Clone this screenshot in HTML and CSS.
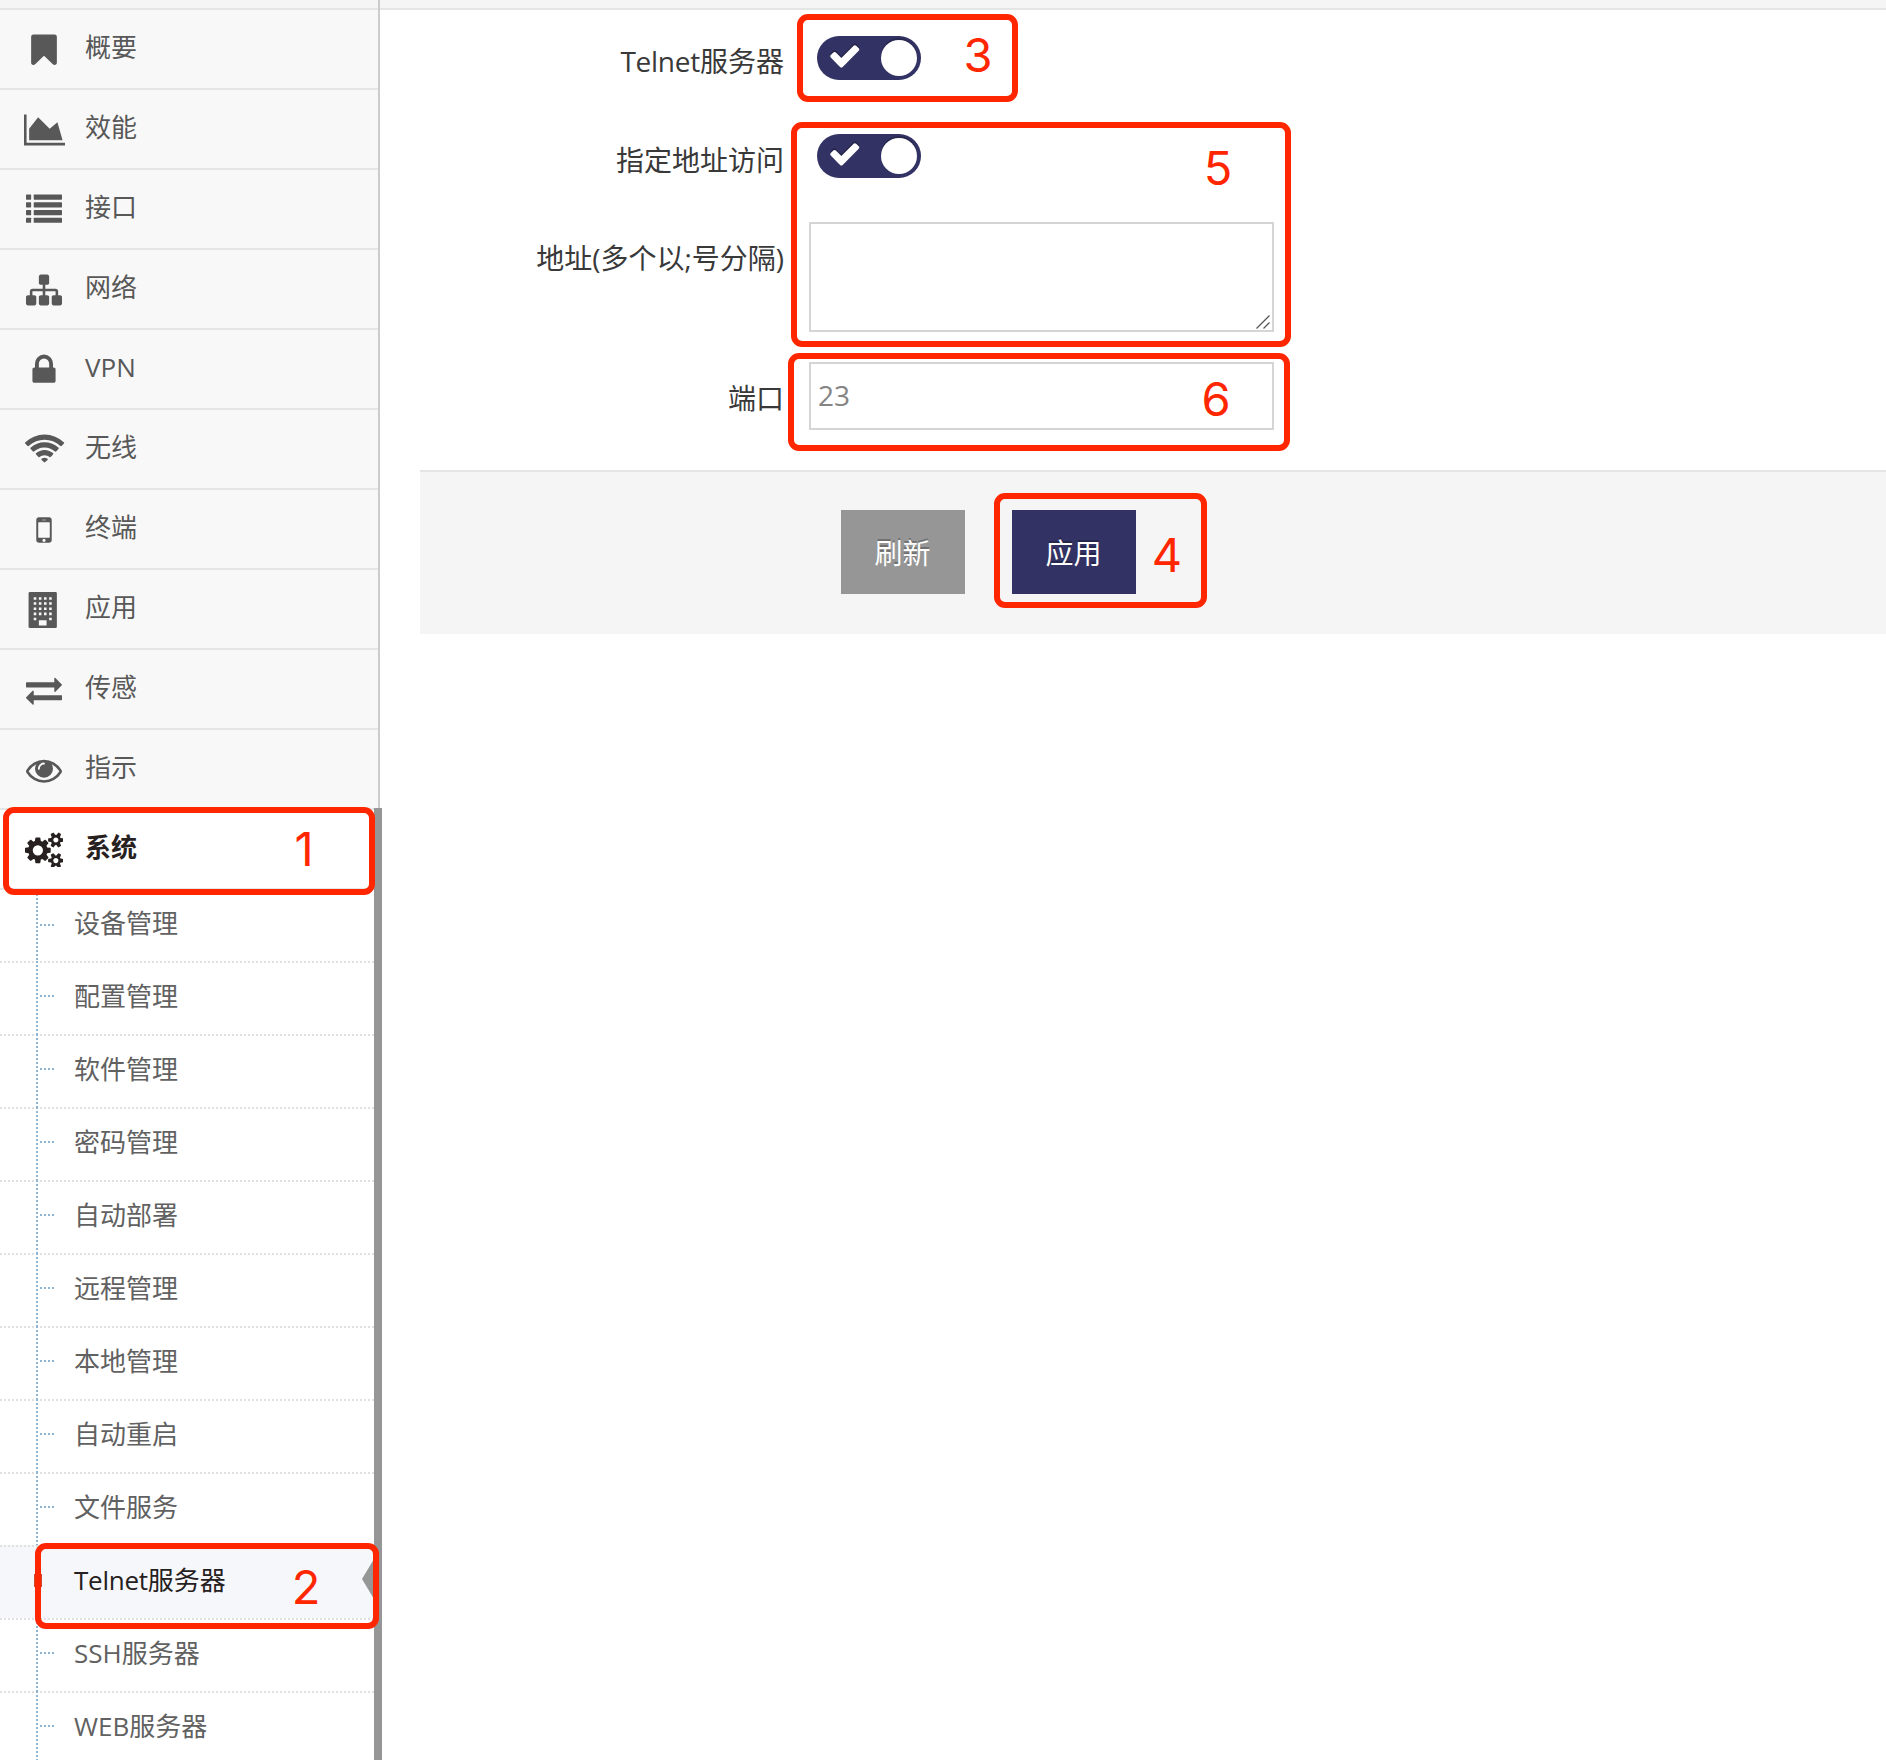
FILE: index.html
```html
<!DOCTYPE html>
<html lang="zh-CN">
<head>
<meta charset="utf-8">
<title>Telnet服务器</title>
<link rel="stylesheet" href="styles.css">
</head>
<body>
<div class="page">
  <aside class="sidebar">
    <ul class="menu">
      <li class="menu-item"><span class="icon"><svg width="36" height="36" viewBox="0 0 1792 1792"><path d="M1420 128q23 0 44 9 33 13 52.500 41t19.500 62v1289q0 34-19.500 62t-52.500 41q-19 8-44 8-48 0-83-32l-441-424-441 424q-36 33-83 33-23 0-44-9-33-13-52.500-41t-19.500-62v-1289q0-34 19.500-62t52.500-41q21-9 44-9h1048z"/></svg></span>概要</li>
      <li class="menu-item"><span class="icon wide"><svg width="41.140" height="36" viewBox="0 0 2048 1792"><path d="M2048 1536v128h-2048v-1536h128v1408h1920zm-384-1024l256 896h-1664v-576l448-576 576 576z"/></svg></span>效能</li>
      <li class="menu-item"><span class="icon"><svg width="36" height="36" viewBox="0 0 1792 1792"><g><rect y="128" width="256" height="256" rx="32"/><rect x="384" y="128" width="1408" height="256" rx="32"/><rect y="512" width="256" height="256" rx="32"/><rect x="384" y="512" width="1408" height="256" rx="32"/><rect y="896" width="256" height="256" rx="32"/><rect x="384" y="896" width="1408" height="256" rx="32"/><rect y="1280" width="256" height="256" rx="32"/><rect x="384" y="1280" width="1408" height="256" rx="32"/></g></svg></span>接口</li>
      <li class="menu-item"><span class="icon"><svg width="36" height="36" viewBox="0 0 1792 1792"><path d="M1792 1248v320q0 40-28 68t-68 28h-320q-40 0-68-28t-28-68v-320q0-40 28-68t68-28h96v-192h-512v192h96q40 0 68 28t28 68v320q0 40-28 68t-68 28h-320q-40 0-68-28t-28-68v-320q0-40 28-68t68-28h96v-192h-512v192h96q40 0 68 28t28 68v320q0 40-28 68t-68 28h-320q-40 0-68-28t-28-68v-320q0-40 28-68t68-28h96v-192q0-52 38-90t90-38h512v-192h-96q-40 0-68-28t-28-68v-320q0-40 28-68t68-28h320q40 0 68 28t28 68v320q0 40-28 68t-68 28h-96v192h512q52 0 90 38t38 90v192h96q40 0 68 28t28 68z"/></svg></span>网络</li>
      <li class="menu-item"><span class="icon"><svg width="36" height="36" viewBox="0 0 1792 1792"><path d="M640 768h512v-192q0-106-75-181t-181-75-181 75-75 181v192zm832 96v576q0 40-28 68t-68 28h-960q-40 0-68-28t-28-68v-576q0-40 28-68t68-28h32v-192q0-184 132-316t316-132 316 132 132 316v192h32q40 0 68 28t28 68z"/></svg></span>VPN</li>
      <li class="menu-item"><span class="icon wide"><svg width="41.140" height="36" viewBox="0 0 2048 1792"><path d="M1024 1523q-20 0-93-73.500t-73-93.500q0-32 62.500-54t103.500-22 103.500 22 62.500 54q0 20-73 93.500t-93 73.500zm270-271q-2 0-40-25t-101.500-50-128.500-25-128.500 25-101 50-40.500 25q-18 0-93.500-75t-75.500-93q0-13 10-23 78-77 196-121t233-44 233 44 196 121q10 10 10 23 0 18-75.500 93t-93.500 75zm273-272q-11 0-23-8-136-105-252-154.500t-268-49.500q-85 0-170.500 22t-149 53-113.500 62-79 53-31 22q-17 0-92-75t-75-93q0-12 10-22 132-132 320-205t380-73 380 73 320 205q10 10 10 22 0 18-75 93t-92 75zm271-271q-11 0-22-9-179-157-371.500-236.500t-420.500-79.500-420.500 79.500-371.500 236.500q-11 9-22 9-17 0-92.500-75t-75.500-93q0-13 10-23 187-186 445-288t527-102 527 102 445 288q10 10 10 23 0 18-75.500 93t-92.500 75z"/></svg></span>无线</li>
      <li class="menu-item"><span class="icon"><svg width="36" height="36" viewBox="0 0 1792 1792"><path d="M976 1408q0-33-23.500-56.500t-56.500-23.500-56.500 23.500-23.500 56.500 23.500 56.500 56.500 23.500 56.500-23.500 23.500-56.500zm208-160v-704q0-13-9.500-22.500t-22.500-9.500h-512q-13 0-22.500 9.500t-9.500 22.500v704q0 13 9.500 22.500t22.500 9.500h512q13 0 22.500-9.500t9.500-22.500zm-192-848q0-16-16-16h-160q-16 0-16 16t16 16h160q16 0 16-16zm288-16v1024q0 52-38 90t-90 38h-512q-52 0-90-38t-38-90v-1024q0-52 38-90t90-38h512q52 0 90 38t38 90z"/></svg></span>终端</li>
      <li class="menu-item"><span class="icon"><svg width="36" height="36" viewBox="0 0 1792 1792"><path fill-rule="evenodd" d="M192 0h1280q64 0 64 64v1664q0 64-64 64h-1280q-64 0-64-64v-1664q0-64 64-64zM384 256v128h128v-128zm256 0v128h128v-128zm256 0v128h128v-128zm256 0v128h128v-128zM384 512v128h128v-128zm256 0v128h128v-128zm256 0v128h128v-128zm256 0v128h128v-128zM384 768v128h128v-128zm256 0v128h128v-128zm256 0v128h128v-128zm256 0v128h128v-128zM384 1024v128h128v-128zm256 0v128h128v-128zm256 0v128h128v-128zm256 0v128h128v-128zM384 1280v128h128v-128zm768 0v128h128v-128zM640 1408v256h384v-256z"/></svg></span>应用</li>
      <li class="menu-item"><span class="icon"><svg width="36" height="36" viewBox="0 0 1792 1792"><path d="M1792 1184v192q0 13-9.500 22.500t-22.500 9.500h-1376v192q0 13-9.500 22.500t-22.500 9.500q-12 0-24-10l-319-320q-9-9-9-22 0-14 9-23l320-320q9-9 23-9 13 0 22.500 9.500t9.500 22.500v192h1376q13 0 22.500 9.500t9.500 22.500zm0-544q0 14-9 23l-320 320q-9 9-23 9-13 0-22.500-9.500t-9.500-22.500v-192h-1376q-13 0-22.500-9.500t-9.500-22.500v-192q0-13 9.500-22.500t22.500-9.500h1376v-192q0-14 9-23t23-9q12 0 24 10l319 319q9 9 9 23z"/></svg></span>传感</li>
      <li class="menu-item"><span class="icon"><svg width="36" height="36" viewBox="0 0 1792 1792"><path d="M1664 960q-152-236-381-353 61 104 61 225 0 185-131.500 316.500t-316.500 131.500-316.500-131.500-131.500-316.500q0-121 61-225-229 117-381 353 133 205 333.500 326.500t434.500 121.500 434.500-121.500 333.500-326.500zm-720-384q0-20-14-34t-34-14q-125 0-214.500 89.500t-89.500 214.500q0 20 14 34t34 14 34-14 14-34q0-86 61-147t147-61q20 0 34-14t14-34zm848 384q0 34-20 69-140 230-376.500 368.500t-499.500 138.500-499.500-139-376.500-368q-20-35-20-69t20-69q140-229 376.500-368t499.500-139 499.500 139 376.500 368q20 35 20 69z"/></svg></span>指示</li>
    </ul>
    <div class="menu-open">
      <div class="menu-item active"><span class="icon"><svg width="38.570" height="36" viewBox="0 0 1920 1792"><path d="M896 960q0-106-75-181t-181-75-181 75-75 181 75 181 181 75 181-75 75-181zm768 512q0-52-38-90t-90-38-90 38-38 90q0 53 37.500 90.500t90.500 37.500 90.500-37.500 37.500-90.500zm0-1024q0-52-38-90t-90-38-90 38-38 90q0 53 37.500 90.500t90.500 37.500 90.500-37.500 37.500-90.500zm-384 421v185q0 10-7 19.500t-16 10.500l-155 24q-11 35-32 76 34 48 90 115 7 11 7 20 0 12-7 19-23 30-82.500 89.500t-78.500 59.500q-11 0-21-7l-115-90q-37 19-77 31-11 108-23 155-7 24-30 24h-186q-11 0-20-7.500t-10-17.500l-23-153q-34-10-75-31l-118 89q-7 7-20 7-11 0-21-8-144-133-144-160 0-9 7-19 10-14 41-53t47-61q-23-44-35-82l-152-24q-10-1-17-9.500t-7-19.500v-185q0-10 7-19.500t16-10.500l155-24q11-35 32-76-34-48-90-115-7-11-7-20 0-12 7-20 22-30 82-89t79-59q11 0 21 7l115 90q34-18 77-32 11-108 23-154 7-24 30-24h186q11 0 20 7.500t10 17.500l23 153q34 10 75 31l118-89q8-7 20-7 11 0 21 8 144 133 144 160 0 8-7 19-12 16-42 54t-45 60q23 48 34 82l152 23q10 2 17 10.500t7 19.500zm640 533v140q0 16-149 31-12 27-30 52 51 113 51 138 0 4-4 7-122 71-124 71-8 0-46-47t-52-68q-20 2-30 2t-30-2q-14 21-52 68t-46 47q-2 0-124-71-4-3-4-7 0-25 51-138-18-25-30-52-149-15-149-31v-140q0-16 149-31 13-29 30-52-51-113-51-138 0-4 4-7 4-2 35-20t59-34 30-16q8 0 46 46.500t52 67.500q20-2 30-2t30 2q51-71 92-112l6-2q4 0 124 70 4 3 4 7 0 25-51 138 17 23 30 52 149 15 149 31zm0-1024v140q0 16-149 31-12 27-30 52 51 113 51 138 0 4-4 7-122 71-124 71-8 0-46-47t-52-68q-20 2-30 2t-30-2q-14 21-52 68t-46 47q-2 0-124-71-4-3-4-7 0-25 51-138-18-25-30-52-149-15-149-31v-140q0-16 149-31 13-29 30-52-51-113-51-138 0-4 4-7 4-2 35-20t59-34 30-16q8 0 46 46.500t52 67.500q20-2 30-2t30 2q51-71 92-112l6-2q4 0 124 70 4 3 4 7 0 25-51 138 17 23 30 52 149 15 149 31z"/></svg></span>系统</div>
      <ul class="submenu">
        <li class="sub-item">设备管理</li>
        <li class="sub-item">配置管理</li>
        <li class="sub-item">软件管理</li>
        <li class="sub-item">密码管理</li>
        <li class="sub-item">自动部署</li>
        <li class="sub-item">远程管理</li>
        <li class="sub-item">本地管理</li>
        <li class="sub-item">自动重启</li>
        <li class="sub-item">文件服务</li>
        <li class="sub-item current"><span class="latin">Telnet</span>服务器</li>
        <li class="sub-item">SSH服务器</li>
        <li class="sub-item">WEB服务器</li>
      </ul>
    </div>
  </aside>
  <main class="main">
    <div class="topbar"></div>
    <form class="form">
      <div class="row">
        <label class="label first"><span class="latin">Telnet</span>服务器</label>
        <span class="toggle"><svg class="check" width="33.500" height="33.500" viewBox="0 0 1792 1792"><path d="M1671 566q0 40-28 68l-724 724-136 136q-28 28-68 28t-68-28l-136-136-362-362q-28-28-28-68t28-68l136-136q28-28 68-28t68 28l294 295 656-657q28-28 68-28t68 28l136 136q28 28 28 68z"/></svg><i class="knob"></i></span>
      </div>
      <div class="row">
        <label class="label">指定地址访问</label>
        <span class="toggle"><svg class="check" width="33.500" height="33.500" viewBox="0 0 1792 1792"><path d="M1671 566q0 40-28 68l-724 724-136 136q-28 28-68 28t-68-28l-136-136-362-362q-28-28-28-68t28-68l136-136q28-28 68-28t68 28l294 295 656-657q28-28 68-28t68 28l136 136q28 28 28 68z"/></svg><i class="knob"></i></span>
      </div>
      <div class="row row-area">
        <label class="label">地址(多个以;号分隔)</label>
        <div class="area-wrap">
          <textarea class="field area"></textarea>
          <svg class="grip" width="14" height="14" viewBox="0 0 14 14"><path d="M.5 13.500l13-13M7.500 13.500l6-6"/></svg>
        </div>
      </div>
      <div class="row row-port">
        <label class="label">端口</label>
        <input class="field port" type="text" placeholder="23">
      </div>
      <div class="actions">
        <button class="btn" type="button">刷新</button>
        <button class="btn primary" type="button">应用</button>
      </div>
    </form>
  </main>
  <div class="mark m1"></div><span class="num n1">1</span>
  <div class="mark m2"></div><span class="num n2">2</span>
  <div class="mark m3"></div><span class="num n3">3</span>
  <div class="mark m4"></div><span class="num n4">4</span>
  <div class="mark m5"></div><span class="num n5">5</span>
  <div class="mark m6"></div><span class="num n6">6</span>
</div>
</body>
</html>
```
FILE: styles.css
```css
* { box-sizing: border-box; }

body {
  margin: 0;
  background: #fff;
  font-family: "Open Sans", "Noto Sans CJK SC", sans-serif;
  font-size: 28px;
  color: #393939;
}

.page {
  position: relative;
  display: flex;
  width: 1886px;
  height: 1760px;
  overflow: hidden;
}

/* sidebar */
.sidebar { width: 382px; flex: none; }

.menu, .submenu { margin: 0; padding: 0; list-style: none; }

.menu {
  width: 380px;
  padding-top: 8px;
  background: #f5f5f5;
  border-right: 2px solid #ccc;
}

.menu-item {
  display: flex;
  align-items: flex-start;
  height: 80px;
  border-top: 2px solid #e5e5e5;
  background: #f8f8f8;
  color: #585858;
  font-size: 26px;
  line-height: 74px;
  padding-left: 14px;
}

.icon {
  display: flex;
  justify-content: center;
  flex: none;
  width: 60px;
  margin-right: 11px;
  padding-top: 22px;
}

.icon.wide { padding-left: 1px; }

.icon svg { display: block; flex: none; fill: currentColor; }

.menu-open { border-right: 8px solid #969696; background: #fff; }

.menu-item.active { background: #fff; color: #262020; font-weight: 700; }

.active .icon { padding-top: 21px; }

.submenu {
  height: 872px;
  overflow: hidden;
  border-top: 2px solid #e5e5e5;
}

.sub-item {
  position: relative;
  height: 73px;
  padding: 2px 0 0 74px;
  font-size: 26px;
  line-height: 67px;
  color: #616161;
  background: repeating-linear-gradient(90deg, #e0e0e0 0 2px, transparent 2px 4px) 0 0 / 100% 2px no-repeat;
}

.sub-item:first-child { height: 71px; background: none; padding-top: 0; }

.latin { letter-spacing: -.25px; }

/* tree guide line and its branch */
.sub-item::before {
  content: "";
  position: absolute;
  left: 36px;
  top: 0;
  width: 2px;
  height: 100%;
  background: repeating-linear-gradient(180deg, #8fb4d4 0 2px, transparent 2px 4px);
}

.sub-item::after {
  content: "";
  position: absolute;
  left: 40px;
  top: 34px;
  width: 14px;
  height: 2px;
  background: repeating-linear-gradient(90deg, #8fb4d4 0 2px, transparent 2px 4px);
}

.sub-item.current { background-color: #f5f7fb; color: #262020; }

.sub-item.current::before {
  left: 34px;
  top: 29px;
  width: 8px;
  height: 13px;
  background: #c84a2b;
}

.sub-item.current::after {
  left: auto;
  right: 0;
  top: 14px;
  width: 12px;
  height: 40px;
  background: #969696;
  clip-path: polygon(100% 0, 0 50%, 100% 100%);
}

/* main */
.main { flex: 1; min-width: 0; margin-left: -2px; }

.topbar { height: 10px; background: #f5f5f5; border-bottom: 2px solid #e5e5e5; }

.form { margin-left: 40px; }

.row { display: flex; align-items: flex-start; height: 98px; }

.label {
  width: 364px;
  margin-right: 25px;
  padding-top: 32px;
  line-height: 40px;
  text-align: right;
  white-space: nowrap;
}

.label.first { padding-top: 31px; }

.toggle {
  display: flex;
  justify-content: space-between;
  width: 104px;
  height: 44px;
  margin: 26px 0 0 8px;
  padding: 4px 4px 4px 11px;
  border-radius: 22px;
  background: #333264;
}

.check { margin-top: -1px; fill: #fff; filter: drop-shadow(0 -2px 0 rgba(0, 0, 0, .25)); }

.knob {
  width: 36px;
  height: 36px;
  border-radius: 50%;
  background: #fff;
  box-shadow: 0 -2px 0 rgba(0, 0, 0, .2);
}

.row-area { height: 140px; }

.row-port { height: 124px; }

.area-wrap { position: relative; width: 465px; height: 110px; margin-top: 16px; }

.field {
  display: block;
  width: 465px;
  border: 2px solid #d5d5d5;
  border-radius: 0;
  background: #fff;
  font: inherit;
  color: #858585;
  outline: none;
}

.field::placeholder { color: #858585; opacity: 1; }

.area { height: 110px; resize: none; }

.grip {
  position: absolute;
  right: 4px;
  bottom: 3px;
  fill: none;
  stroke: #555;
  stroke-width: 1.3;
}

.port { height: 68px; margin-top: 16px; padding: 0 7px 2px; }

.actions {
  display: flex;
  gap: 47px;
  height: 164px;
  padding: 38px 0 0 421px;
  border-top: 2px solid #e5e5e5;
  background: #f5f5f5;
}

.btn {
  width: 124px;
  height: 84px;
  padding: 0 1px 1px 0;
  border: 0;
  background: #969696;
  color: #fff;
  font: inherit;
  text-shadow: 0 -2px 0 rgba(0, 0, 0, .25);
}

.btn.primary { background: #333264; }

/* numbered callouts lying over the page */
.mark { position: absolute; border: 6px solid #ff2600; border-radius: 11px; }

.m1 { left: 3px; top: 807px; width: 372px; height: 88px; }
.m2 { left: 35px; top: 1543px; width: 344px; height: 86px; }
.m3 { left: 797px; top: 14px; width: 221px; height: 88px; }
.m4 { left: 994px; top: 493px; width: 213px; height: 115px; }
.m5 { left: 791px; top: 122px; width: 500px; height: 225px; }
.m6 { left: 788px; top: 353px; width: 502px; height: 98px; }

.num {
  position: absolute;
  width: 40px;
  text-align: center;
  font: 400 47px/48px Inter, sans-serif;
  color: #ff2600;
}

.n1 { left: 284px; top: 825px; }
.n2 { left: 286px; top: 1563px; }
.n3 { left: 958px; top: 31px; }
.n4 { left: 1147px; top: 531px; }
.n5 { left: 1198px; top: 144px; }
.n6 { left: 1196px; top: 375px; }
```
